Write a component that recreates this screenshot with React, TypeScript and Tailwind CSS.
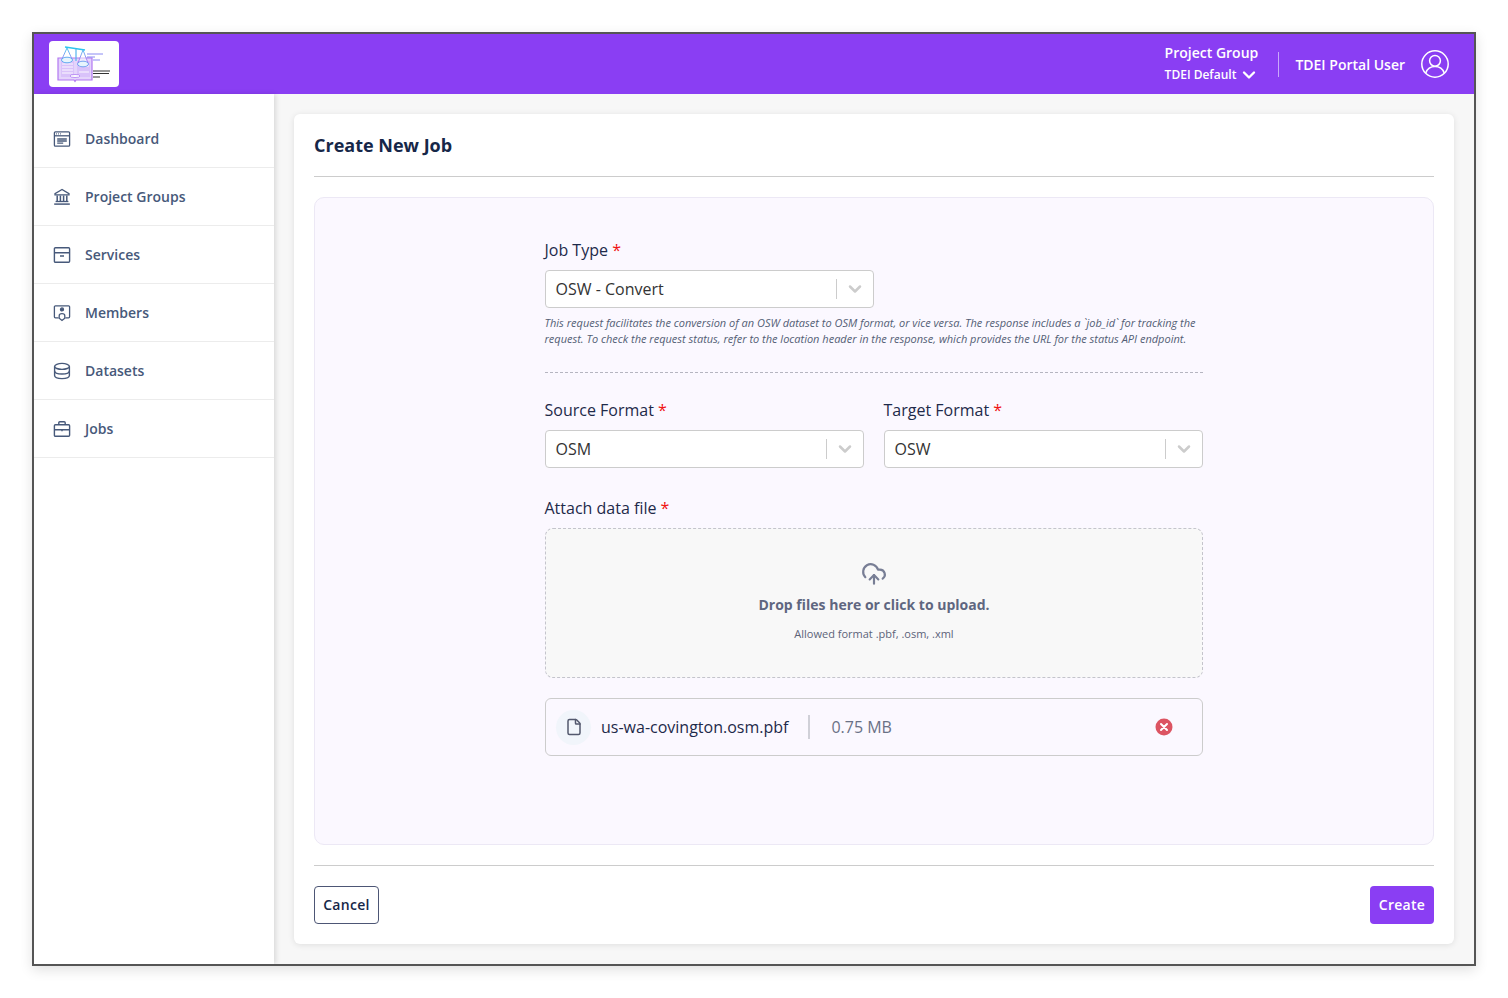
import { ChevronDown, CloudUpload, FileText } from "lucide-react";
import type { ReactNode } from "react";

function DashboardIcon() {
  return (
    <svg width="18" height="18" viewBox="0 0 18 18" fill="none" stroke="currentColor" strokeWidth="1.3">
      <rect x="1.4" y="1.8" width="15.2" height="14.4" rx="1" />
      <path d="M1.4 5.800h15.200" />
      <path d="M3.200 3.800h.8M5.200 3.800h.8M7.200 3.800h.8" />
      <path d="M4.200 9h9.600M4.200 11h9.600M4.200 13.200h6" />
    </svg>
  );
}

function BankIcon() {
  return (
    <svg width="18" height="18" viewBox="0 0 18 18" fill="none" stroke="currentColor" strokeWidth="1.3">
      <path d="M9 1.500 2 5.600v1.200h14V5.600z" />
      <path d="M4.200 7.500v5.500M7.400 7.500v5.500M10.600 7.500v5.500M13.800 7.500v5.500" strokeWidth="1.500" />
      <path d="M2.600 13.500h12.800" />
      <path d="M1.200 16.100h15.600" strokeWidth="1.500" />
    </svg>
  );
}

function ServicesIcon() {
  return (
    <svg width="18" height="18" viewBox="0 0 18 18" fill="none" stroke="currentColor" strokeWidth="1.4">
      <rect x="1.400" y="1.700" width="15.200" height="14.600" rx="1" />
      <path d="M1.400 6.800h15.200M7 10h4" />
    </svg>
  );
}

function MembersIcon() {
  return (
    <svg width="18" height="18" viewBox="0 0 18 18" fill="none" stroke="currentColor" strokeWidth="1.3">
      <path d="M5.600 13.800H2.400a1 1 0 0 1-1-1V2.800a1 1 0 0 1 1-1h13.200a1 1 0 0 1 1 1v10a1 1 0 0 1-1 1h-3.200" />
      <circle cx="9" cy="5.400" r="1.500" fill="currentColor" />
      <path d="M6.200 14.300v-2.500c0-1.200 1.200-2.100 2.800-2.100s2.800.9 2.800 2.100v2.500L9 16.500z" />
    </svg>
  );
}

function DatasetsIcon() {
  return (
    <svg width="18" height="18" viewBox="0 0 18 18" fill="none" stroke="currentColor" strokeWidth="1.4">
      <ellipse cx="9" cy="4.400" rx="7.400" ry="3" />
      <path d="M1.600 4.400v9.200c0 1.700 3.300 3 7.400 3s7.400-1.300 7.400-3V4.400" />
      <path d="M1.600 9c0 1.700 3.300 3 7.400 3s7.400-1.300 7.400-3" />
    </svg>
  );
}

function JobsIcon() {
  return (
    <svg width="18" height="18" viewBox="0 0 18 18" fill="none" stroke="currentColor" strokeWidth="1.4">
      <rect x="1.400" y="4.800" width="15.200" height="11.400" rx="1" />
      <path d="M5.800 4.800V2.800a1 1 0 0 1 1-1h4.400a1 1 0 0 1 1 1v2" />
      <path d="M1.400 9.800h15.200M9 9v2.200" />
    </svg>
  );
}

function Logo() {
  return (
    <svg width="70" height="46" viewBox="0 0 70 46" fill="none" className="blur-[0.4px]">
      <defs>
        <linearGradient id="logoGrad" x1="0" y1="0" x2="0" y2="1">
          <stop offset="0" stopColor="#35c2ee" />
          <stop offset="0.5" stopColor="#7a96f0" />
          <stop offset="1" stopColor="#b96cf2" />
        </linearGradient>
      </defs>
      {/* book */}
      <path d="M9 17h34v22H27l-1 1.500-1-1.500H9z" fill="#e4d4fb" stroke="#b278f2" strokeWidth="1.200" />
      <path d="M12 20h13v16H12zM28 20h13v16H28z" fill="#d9c2fa" />
      <path d="M13 23h11M13 26h11M13 29h11M13 32h11M30 25h10M30 31h10" stroke="#ffffff" strokeWidth="0.900" />
      <ellipse cx="26" cy="35" rx="5" ry="1.500" fill="#ffffff" stroke="#a56cf0" strokeWidth="0.700" />
      {/* scales */}
      <path d="M16 6l20 3" stroke="#2fc4ee" strokeWidth="1.500" />
      <path d="M27 8v12" stroke="#55b4ee" strokeWidth="1.200" />
      <path d="M18 7l-5 11h10zM34 9l-5 13h10z" stroke="url(#logoGrad)" strokeWidth="0.900" fill="#ffffff" fillOpacity="0.5" />
      <ellipse cx="18" cy="19" rx="5.500" ry="2.800" fill="#e6f4fd" stroke="#55a8ee" strokeWidth="0.900" />
      <ellipse cx="34" cy="23" rx="5.500" ry="2.800" fill="#e6f4fd" stroke="#6a9cee" strokeWidth="0.900" />
      {/* caption */}
      <path d="M38 13h16M38 16h8M44 19h7" stroke="#6d6df0" strokeWidth="0.800" />
      <path d="M44 30h17M44 32.500h16M44 36h7" stroke="#333333" strokeWidth="1" />
    </svg>
  );
}

const navItems: { label: string; icon: ReactNode }[] = [
  { label: "Dashboard", icon: <DashboardIcon /> },
  { label: "Project Groups", icon: <BankIcon /> },
  { label: "Services", icon: <ServicesIcon /> },
  { label: "Members", icon: <MembersIcon /> },
  { label: "Datasets", icon: <DatasetsIcon /> },
  { label: "Jobs", icon: <JobsIcon /> },
];

function Label({ children }: { children: ReactNode }) {
  return (
    <div className="mb-2 -ml-[0.5px] h-[24px] text-[16px] leading-[24px] text-[#1e2a4a]">
      {children} <span className="text-[#f01010]">*</span>
    </div>
  );
}

function SelectBox({ value, className }: { value: string; className: string }) {
  return (
    <div className={`flex h-[38px] items-center rounded-[4px] border border-[#cccccc] bg-white pl-[9.5px] ${className}`}>
      <span className="flex-1 text-[16px] text-[#333333]">{value}</span>
      <span className="h-[20px] w-px bg-[#cccccc]" />
      <span className="flex w-[36px] justify-center text-[#cccccc]">
        <ChevronDown size={20} strokeWidth={3} />
      </span>
    </div>
  );
}

export default function App() {
  return (
    <div className="bg-white p-8 font-['Open_Sans',sans-serif]">
      <div className="flex h-[934px] flex-col overflow-hidden border-2 border-[#555555] bg-[#f7f7f7] shadow-[0_4px_12px_rgba(0,0,0,0.12)]">
        <header className="flex h-[60px] shrink-0 items-center justify-between bg-[#8a3ef3] pl-[15px] pr-[25px] text-white">
          <div className="flex h-[46px] w-[70px] items-center justify-center rounded-[4px] bg-white">
            <Logo />
          </div>
          <div className="flex items-center">
            <div className="mr-5 pb-px">
              <div className="text-[14px] font-semibold leading-[20px]">Project Group</div>
              <div className="mt-[3px] flex h-[18px] items-center text-[12px] font-semibold leading-[18px]">
                TDEI Default
                <ChevronDown size={20} strokeWidth={2.8} className="-mr-[1px] ml-[3px]" />
              </div>
            </div>
            <div className="mr-4 h-[25px] w-px bg-[#c9a8fa]" />
            <span className="mr-4 text-[14px] font-semibold">TDEI Portal User</span>
            <svg width="28" height="28" viewBox="0 0 28 28" fill="none" stroke="white" strokeWidth="1.5">
              <circle cx="14" cy="14" r="13.200" />
              <circle cx="14" cy="10.800" r="5.400" />
              <path d="M4.800 23c1.400-4 4.800-6.400 9.200-6.400s7.800 2.400 9.200 6.400" />
            </svg>
          </div>
        </header>

        <div className="flex min-h-0 flex-1">
          <aside className="w-[240px] shrink-0 bg-white pt-[16px] shadow-[2px_0_5px_rgba(0,0,0,0.12)]">
            {navItems.map((item) => (
              <div key={item.label} className="flex h-[58px] items-center border-b border-[#ececec] pl-[19px] text-[#47597a]">
                <span className="flex w-[18px] justify-center">{item.icon}</span>
                <span className="ml-[14px] text-[14px] font-semibold">{item.label}</span>
              </div>
            ))}
          </aside>

          <main className="flex-1 p-5">
            <div className="flex h-full flex-col rounded-[6px] bg-white px-5 shadow-[0_1px_6px_rgba(0,0,0,0.1)]">
              <div className="flex h-[63px] shrink-0 items-center border-b border-[#cccccc]">
                <h1 className="text-[18px] font-bold text-[#162748]">Create New Job</h1>
              </div>

              <div className="mt-5 flex-1 rounded-[10px] border border-[#ece8f5] bg-[#fbf8ff] pt-[40px]">
                <div className="mx-auto w-[658px]">
                  <Label>Job Type</Label>
                  <SelectBox value="OSW - Convert" className="w-[329px]" />
                  <p className="mt-[7px] -ml-[0.5px] w-[658px] text-[11px] italic leading-[16px] text-[#535e75]">
                    This request facilitates the conversion of an OSW dataset to OSM format, or vice versa. The response includes a `job_id` for tracking the request. To check the request status, refer to the location header in the response, which provides the URL for the status API endpoint.
                  </p>
                  <div className="mt-[25px] border-t border-dashed border-[#b5b5c0]" />

                  <div className="mt-[25px] flex gap-5">
                    <div className="flex-1">
                      <Label>Source Format</Label>
                      <SelectBox value="OSM" className="w-full" />
                    </div>
                    <div className="flex-1">
                      <Label>Target Format</Label>
                      <SelectBox value="OSW" className="w-full" />
                    </div>
                  </div>

                  <div className="mt-[28px]">
                    <Label>Attach data file</Label>
                    <div className="flex h-[150px] flex-col items-center rounded-[8px] border border-dashed border-[#c4c4cc] bg-[#f8f8f8] pt-[32px] text-[#5f6680]">
                      <CloudUpload size={26} strokeWidth={2} className="text-[#787e95]" />
                      <div className="mt-[8px] text-[14px] font-bold leading-[20px]">Drop files here or click to upload.</div>
                      <div className="mt-[10px] text-[11px] leading-[18px] text-[#5c6378]">Allowed format .pbf, .osm, .xml</div>
                    </div>
                  </div>

                  <div className="mt-5 flex h-[58px] items-center rounded-[6px] border border-[#cccccc] pl-[10px] pr-[29px]">
                    <span className="flex h-[35px] w-[35px] items-center justify-center rounded-full bg-[#f1f5fb]">
                      <FileText size={18} strokeWidth={2} className="text-[#53586e] [&>path:nth-child(n+3)]:hidden" />
                    </span>
                    <span className="ml-[10px] text-[16px] text-[#1e2a4a]">us-wa-covington.osm.pbf</span>
                    <span className="ml-5 h-[24px] w-[2px] bg-[#d0d0d8]" />
                    <span className="ml-[21px] flex-1 text-[16px] text-[#6a7186]">0.75 MB</span>
                    <svg width="18" height="18" viewBox="0 0 18 18">
                      <circle cx="9" cy="9" r="8.500" fill="#dc5462" />
                      <path d="M6 6l6 6M12 6l-6 6" stroke="white" strokeWidth="2" strokeLinecap="round" />
                    </svg>
                  </div>
                </div>
              </div>

              <div className="mt-5 flex h-[79px] shrink-0 items-start justify-between border-t border-[#cccccc] pt-5">
                <button className="h-[38px] w-[65px] rounded-[4px] border border-[#4d5675] pb-[2px] text-[14px] font-semibold tracking-[0.3px] text-[#162748]">
                  Cancel
                </button>
                <button className="h-[38px] w-[64px] rounded-[4px] bg-[#8a3ef3] pb-[2px] text-[14px] font-semibold tracking-[0.3px] text-white">
                  Create
                </button>
              </div>
            </div>
          </main>
        </div>
      </div>
    </div>
  );
}
